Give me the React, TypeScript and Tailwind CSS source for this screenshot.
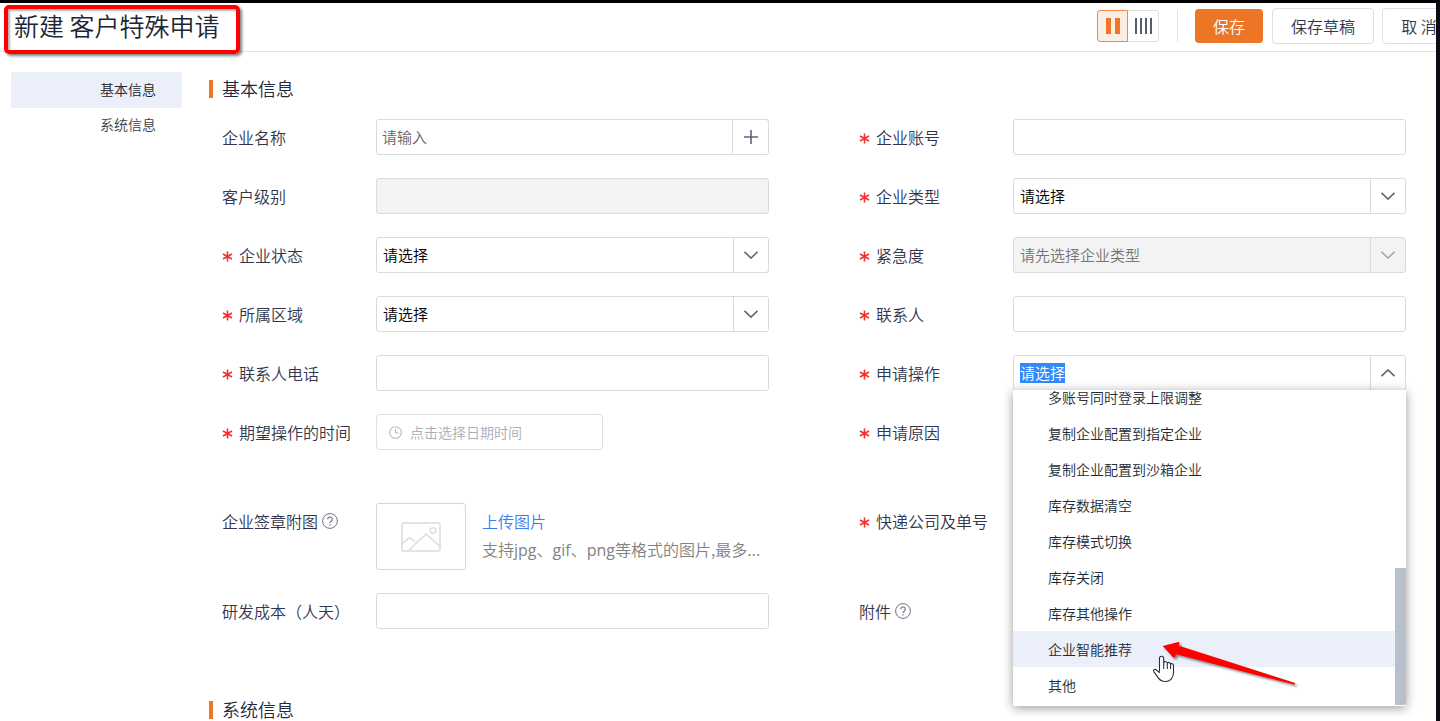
import type { ReactNode } from "react";

const boxClass =
  "h-9 w-full rounded-[3px] border border-[#d9dbe0] bg-white px-1.5 text-[15px] text-black outline-none disabled:bg-[#f3f3f3]";

function HelpIcon() {
  return (
    <svg className="ml-1 size-4 shrink-0" viewBox="0 0 16 16" fill="none" stroke="#6b7388" role="img" aria-label="帮助">
      <circle cx="8" cy="8" r="7.4" />
      <path d="M5.7 6.3a2.3 2.3 0 1 1 3.5 2c-.8.5-1.2.8-1.2 1.7" strokeWidth="1.2" />
      <path d="M8 11.2v1.4" strokeWidth="1.3" />
    </svg>
  );
}

function Chevron({ up = false, muted = false }: { up?: boolean; muted?: boolean }) {
  return (
    <svg
      className="pointer-events-none h-2 w-3.5"
      viewBox="0 0 14 8"
      fill="none"
      stroke={muted ? "#a3a9b5" : "#5c6679"}
      strokeWidth="1.6"
      aria-hidden="true"
    >
      <path d={up ? "M.5 7.2 7 .9l6.500 6.300" : "M.5.8 7 7.100 13.500.8"} />
    </svg>
  );
}

function Field({
  id,
  label,
  required = false,
  help = false,
  children,
}: {
  id: string;
  label: string;
  required?: boolean;
  help?: boolean;
  children?: ReactNode;
}) {
  return (
    <div className="flex min-w-0 items-start">
      <label htmlFor={id} id={`${id}-label`} className="flex h-9 w-[154px] shrink-0 items-center text-[16px] text-[#32364d]">
        {required && (
          <svg className="mr-1.5 mt-0.5 size-[11px] shrink-0" viewBox="0 0 11 11" stroke="#f03030" strokeWidth="1.6" aria-hidden="true">
            <path d="M5.500.5v10M1 3l9 5M10 3 1 8" />
          </svg>
        )}
        {label}
        {help && <HelpIcon />}
      </label>
      <div className="min-w-0 flex-1">{children}</div>
    </div>
  );
}

function TextBox({ id, disabled }: { id: string; disabled?: boolean }) {
  return <input id={id} type="text" disabled={disabled} className={boxClass} />;
}

function SelectBox({ id, text = "请选择", disabled = false }: { id: string; text?: string; disabled?: boolean }) {
  return (
    <div className="relative">
      <select
        id={id}
        disabled={disabled}
        className="h-9 w-full appearance-none rounded-[3px] border border-[#d9dbe0] bg-white pl-1.5 pr-10 text-[15px] text-black disabled:bg-[#f3f3f3] disabled:text-[#757575] disabled:opacity-100"
      >
        <option>{text}</option>
      </select>
      <span className="pointer-events-none absolute inset-y-px right-px flex w-[35px] items-center justify-center border-l border-[#d9dbe0]">
        <Chevron muted={disabled} />
      </span>
    </div>
  );
}

const options = [
  "多账号同时登录上限调整",
  "复制企业配置到指定企业",
  "复制企业配置到沙箱企业",
  "库存数据清空",
  "库存模式切换",
  "库存关闭",
  "库存其他操作",
  "企业智能推荐",
  "其他",
];

function OperationSelect({ id }: { id: string }) {
  return (
    <div className="relative">
      <button
        id={id}
        type="button"
        role="combobox"
        aria-expanded="true"
        aria-haspopup="listbox"
        aria-controls="operation-list"
        aria-labelledby={`${id}-label`}
        className="flex h-9 w-full items-center rounded-[3px] border border-[#d9dbe0] bg-white pl-1.5 text-[15px]"
      >
        <span className="bg-[#3388fb] leading-5 text-white">请选择</span>
        <span className="ml-auto flex h-full w-[35px] items-center justify-center border-l border-[#d9dbe0]">
          <Chevron up />
        </span>
      </button>
      <div className="absolute left-0 top-full z-10 -mt-px w-full shadow-[0_2px_10px_rgba(0,0,0,0.4)]">
        <ul id="operation-list" role="listbox" className="flex h-[316px] flex-col justify-end overflow-hidden bg-white pb-[3px]">
          {options.map((o) => (
            <li
              key={o}
              role="option"
              aria-selected={o === "企业智能推荐"}
              className="flex h-9 shrink-0 items-center pl-[35px] text-[14px] leading-none text-[#212b36] aria-selected:bg-[#ebeffa]"
            >
              {o}
            </li>
          ))}
        </ul>
        <span className="absolute bottom-px right-0 h-[137px] w-[11px] bg-[#b7c0cb]" />
        <svg
          className="absolute left-[140px] top-[245px] overflow-visible"
          width="150"
          height="56"
          viewBox="0 0 150 56"
          aria-hidden="true"
        >
          <path
            d="M6.500 36V23.300a2.100 2.100 0 0 1 4.200 0v4.200c.5-1.300 3.400-1.100 3.600.7.700-1.100 3.100-.8 3.300.8.800-.8 2.900-.3 2.900 1.500v7c0 5.400-3.300 9-8.200 9-3.800 0-5.800-1.600-7.600-4.400L.8 36.600c-.9-1.500.9-2.900 2.300-1.800L6.500 37.500M10.700 27.500v6M14.300 28.200v5.300M17.600 29v4.500"
            fill="#fff"
            stroke="#2b2d3a"
            strokeWidth="1.100"
            strokeLinejoin="round"
            strokeLinecap="round"
          />
          <path
            className="drop-shadow-[2px_2px_1px_rgba(0,0,0,0.45)]"
            d="M9.700 11 26.300 6.700 26 10.700 142 48l-.3 1.700L23.300 19.300 21 23.300Z"
            fill="#fe0000"
          />
        </svg>
      </div>
    </div>
  );
}

function SectionTitle({ children }: { children: ReactNode }) {
  return (
    <h2 className="flex h-[18px] items-center border-l-4 border-[#f07525] pb-0.5 pl-[9px] text-[18px] text-[#22263f]">{children}</h2>
  );
}

export default function App() {
  return (
    <div className="min-h-screen border-r-4 border-t-[3px] border-r-[#0a0c14] border-t-black bg-white font-['Noto_Sans_CJK_SC',sans-serif] font-[350]">
      <div className="overflow-hidden">
        <header className="relative flex h-[49px] items-center border-b border-[#e4e4e6] pl-3.5">
          <h1 className="pb-0.5 text-[25px] text-[#1d2433]">新建 客户特殊申请</h1>
          <span className="absolute left-1 top-0.5 h-[49px] w-[236px] rounded-[5px] border-4 border-[#fe0000] shadow-[2px_2px_3px_rgba(0,0,0,0.5),inset_2px_2px_2px_rgba(0,0,0,0.3)]" />
          <div className="-mr-5 ml-auto flex shrink-0 items-center pb-0.5 text-[16px] text-[#32364d]">
            <div className="flex h-8">
              <button type="button" aria-label="双列布局" className="flex w-[31px] items-center justify-center gap-1 rounded-l-[3px] border border-[#ef8a45] bg-[#fdeee4]">
                <span className="h-4 w-[5px] bg-[#f07525]" />
                <span className="h-4 w-[5px] bg-[#f07525]" />
              </button>
              <button type="button" aria-label="多列布局" className="flex w-[31px] items-center justify-center gap-[3px] rounded-r-[3px] border border-l-0 border-[#dcdfe6]">
                <span className="h-4 w-0.5 bg-[#565c69]" />
                <span className="h-4 w-0.5 bg-[#565c69]" />
                <span className="h-4 w-0.5 bg-[#565c69]" />
                <span className="h-4 w-0.5 bg-[#565c69]" />
              </button>
            </div>
            <span className="ml-[18px] mr-[17px] h-8 w-px bg-[#dfe1e8]" />
            <button type="button" className="h-[34px] w-[68px] rounded-[4px] bg-[#ed7526] text-white">保存</button>
            <button type="button" className="ml-[9px] h-9 w-[102px] rounded-[4px] border border-[#dcdfe6]">保存草稿</button>
            <button type="button" className="ml-2 h-9 w-[74px] rounded-[4px] border border-[#dcdfe6]">取 消</button>
          </div>
        </header>

        <div className="flex pb-2 pl-[11px] pr-[30px] pt-5">
          <nav className="mr-[27px] flex w-[171px] shrink-0 flex-col text-[14px] text-[#3c4049]">
            <a href="#basic" className="flex h-9 items-center rounded-l-[3px] bg-[#ebeffa] pb-0.5 pl-[89px] text-[#20242c]">基本信息</a>
            <a href="#system" className="flex h-[34px] items-center pb-0.5 pl-[89px]">系统信息</a>
          </nav>

          <main className="min-w-0 flex-1 pt-2">
            <section id="basic">
              <SectionTitle>基本信息</SectionTitle>
              <form className="mt-[21px] grid grid-cols-2 grid-rows-[repeat(5,36px)_66px_67px_36px] gap-x-[90px] gap-y-[23px] pl-[13px]">
                <Field id="name" label="企业名称">
                  <div className="flex h-9 rounded-[3px] border border-[#d9dbe0]">
                    <input id="name" type="text" placeholder="请输入" className="min-w-0 flex-1 rounded-[3px] px-[5px] text-[15px] outline-none placeholder:text-[#666]" />
                    <button type="button" aria-label="添加" className="flex w-9 items-center justify-center border-l border-[#d9dbe0]">
                      <svg className="size-3.5" viewBox="0 0 14 14" stroke="#5c6679" strokeWidth="1.600" aria-hidden="true">
                        <path d="M7 0v14M0 7h14" />
                      </svg>
                    </button>
                  </div>
                </Field>
                <Field id="account" label="企业账号" required><TextBox id="account" /></Field>
                <Field id="level" label="客户级别"><TextBox id="level" disabled /></Field>
                <Field id="type" label="企业类型" required><SelectBox id="type" /></Field>
                <Field id="status" label="企业状态" required><SelectBox id="status" /></Field>
                <Field id="urgency" label="紧急度" required><SelectBox id="urgency" text="请先选择企业类型" disabled /></Field>
                <Field id="region" label="所属区域" required><SelectBox id="region" /></Field>
                <Field id="contact" label="联系人" required><TextBox id="contact" /></Field>
                <Field id="phone" label="联系人电话" required><TextBox id="phone" /></Field>
                <Field id="operation" label="申请操作" required><OperationSelect id="operation" /></Field>
                <Field id="time" label="期望操作的时间" required>
                  <div className="flex h-9 w-[227px] items-center rounded-[4px] border border-[#dcdfe6] pl-3">
                    <svg className="size-[13px] shrink-0" viewBox="0 0 13 13" fill="none" stroke="#b4b8c2" strokeWidth="1.100" aria-hidden="true">
                      <circle cx="6.500" cy="6.500" r="5.800" />
                      <path d="M6.500 3v4h3.200" />
                    </svg>
                    <input id="time" type="text" placeholder="点击选择日期时间" className="ml-2 min-w-0 flex-1 text-[14px] outline-none placeholder:text-[#a8adb9]" />
                  </div>
                </Field>
                <Field id="reason" label="申请原因" required>
                  <textarea id="reason" className="block h-16 w-full resize-none rounded-[3px] border border-[#d9dbe0]" />
                </Field>
                <Field id="stamp" label="企业签章附图" help>
                  <div className="flex">
                    <button id="stamp" type="button" aria-labelledby="stamp-label" className="flex h-[67px] w-[90px] shrink-0 items-center justify-center rounded-[3px] border border-[#d6d6d6]">
                      <svg className="h-[30px] w-10" viewBox="0 0 40 30" fill="none" stroke="#dcdcdc" strokeWidth="1.500" aria-hidden="true">
                        <rect x="1" y="1" width="38" height="28" rx="1.500" />
                        <circle cx="32" cy="8.500" r="2.800" />
                        <path d="m1 22 7.500-6.500 5.500 4M7 29l18-17 14 12.500" />
                      </svg>
                    </button>
                    <div className="ml-4 min-w-0 pt-1 text-[16px] leading-7">
                      <a href="#upload" className="block text-[#3b7cf5]">上传图片</a>
                      <p className="truncate text-[#828282]">支持<span className="font-['Open_Sans'] font-normal">jpg</span>、<span className="font-['Open_Sans'] font-normal">gif</span>、<span className="font-['Open_Sans'] font-normal">png</span>等格式的图片,最多...</p>
                    </div>
                  </div>
                </Field>
                <Field id="express" label="快递公司及单号" required><TextBox id="express" /></Field>
                <Field id="cost" label="研发成本（人天）"><TextBox id="cost" /></Field>
                <Field id="files" label="附件" help />
              </form>
            </section>
            <section id="system" className="mt-[72px]">
              <SectionTitle>系统信息</SectionTitle>
            </section>
          </main>
        </div>
      </div>
    </div>
  );
}
